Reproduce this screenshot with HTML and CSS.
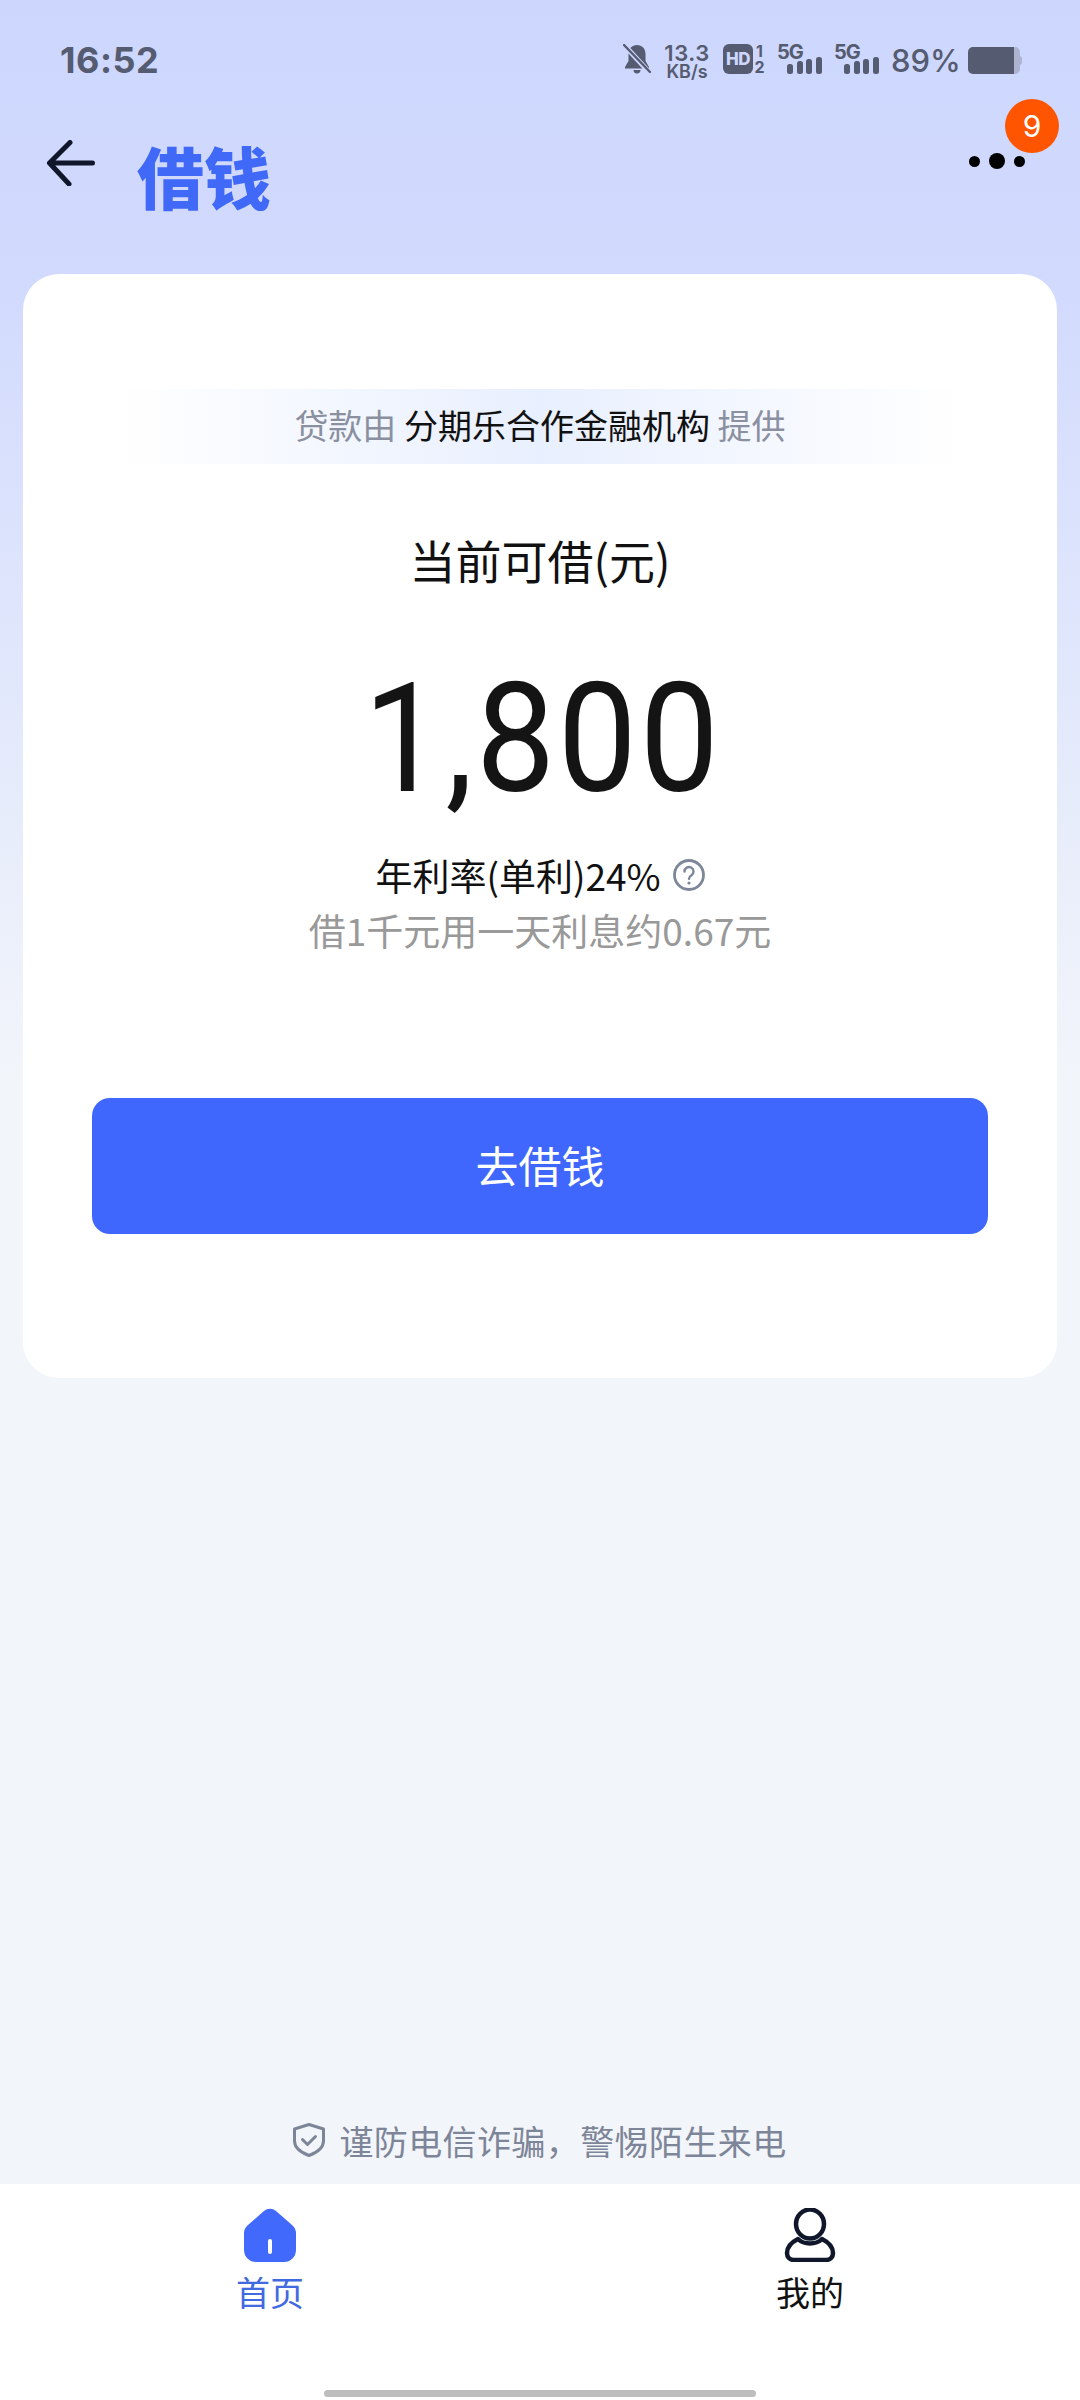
FILE: index.html
```html
<!DOCTYPE html>
<html lang="zh">
<head>
<meta charset="utf-8">
<title>借钱</title>
<link rel="stylesheet" href="styles.css">
</head>
<body>
<div class="page">
  <div class="status">
    <span class="time">16:52</span>
    <div class="status-right">
      <svg class="bell" viewBox="0 0 28 30"><path d="M14 1c-5 0-8.500 3.500-8.500 9v7L2 23v1.500h24V23l-3.500-6v-7C22.500 4.500 19 1 14 1z" fill="#555b70"/><path d="M10.500 26a3.500 3.500 0 0 0 7 0z" fill="#555b70"/><path d="M2 2l24 26" stroke="#cdd6fd" stroke-width="5"/><path d="M1 1l26 27" stroke="#555b70" stroke-width="2.400" stroke-linecap="round"/></svg>
      <div class="speed"><span class="speed-n">13.3</span><span class="speed-u">KB/s</span></div>
      <div class="hd"><span class="hd-box">HD</span><div class="sim"><span>1</span><span>2</span></div></div>
      <div class="net"><span class="net-5g">5G</span><svg class="bars" viewBox="0 0 35 17"><rect x="0" y="7" width="6" height="10" rx="2.500"/><rect x="10" y="4" width="6" height="13" rx="2.500"/><rect x="19" y="2" width="6" height="15" rx="2.500"/><rect x="29" y="0" width="6" height="17" rx="2.500"/></svg></div>
      <div class="net"><span class="net-5g">5G</span><svg class="bars" viewBox="0 0 35 17"><rect x="0" y="7" width="6" height="10" rx="2.500"/><rect x="10" y="4" width="6" height="13" rx="2.500"/><rect x="19" y="2" width="6" height="15" rx="2.500"/><rect x="29" y="0" width="6" height="17" rx="2.500"/></svg></div>
      <span class="pct">89%</span>
      <svg class="battery" viewBox="0 0 54 27"><path d="M46 0h1a5 5 0 0 1 5 5v4a3 3 0 0 1 2 3v3a3 3 0 0 1-2 3v4a5 5 0 0 1-5 5h-1z" fill="#aeb4d0"/><path d="M5 0h41v27H5a5 5 0 0 1-5-5V5a5 5 0 0 1 5-5z" fill="#555b70"/></svg>
    </div>
  </div>

  <div class="nav">
    <svg class="back" viewBox="0 0 48 46"><path d="M45.500 23H3M23 2.500L2.500 23 22 44" fill="none" stroke="#10172a" stroke-width="5" stroke-linecap="round" stroke-linejoin="round"/></svg>
    <h1 class="title">借钱</h1>
    <div class="more">
      <i class="dot"></i><i class="dot dot-big"></i><i class="dot"></i>
      <span class="badge">9</span>
    </div>
  </div>

  <main class="card">
    <div class="lender"><span class="muted">贷款由</span> 分期乐合作金融机构 <span class="muted">提供</span></div>
    <div class="label">当前可借(元)</div>
    <div class="amount">1,800</div>
    <div class="rate">年利率(单利)24%<svg class="help" viewBox="0 0 32 32"><circle cx="16" cy="16" r="14.500" fill="none" stroke="#7d8799" stroke-width="2.800"/><path d="M11.500 12.500a4.500 4.500 0 1 1 7 3.700c-1.600 1-2.500 1.800-2.500 3.600" fill="none" stroke="#7d8799" stroke-width="2.400" stroke-linecap="round"/><circle cx="16" cy="24" r="1.600" fill="#7d8799"/></svg></div>
    <div class="interest">借1千元用一天利息约0.67元</div>
    <button class="cta">去借钱</button>
  </main>

  <div class="notice">
    <svg class="shield" viewBox="0 0 32 34"><path d="M16 1.500l14.500 4.500v12c0 7.500-6.500 11.500-14.500 14.500C8 29.500 1.500 25.500 1.500 18V6z" fill="none" stroke="#7d8598" stroke-width="3" stroke-linejoin="round"/><path d="M9.500 16.500l5 5 8-8" fill="none" stroke="#7d8598" stroke-width="3" stroke-linecap="round" stroke-linejoin="round"/></svg>
    <span>谨防电信诈骗，警惕陌生来电</span>
  </div>

  <nav class="tabs">
    <div class="tab tab-on">
      <svg class="tab-icon" viewBox="0 0 52 54"><path d="M20 3a9 9 0 0 1 12 0l16 14a11 11 0 0 1 4 8v17a12 12 0 0 1-12 12H12A12 12 0 0 1 0 42V25a11 11 0 0 1 4-8z" fill="#4169fb"/><rect x="24" y="31" width="4" height="15" rx="2" fill="#fff"/></svg>
      <span>首页</span>
    </div>
    <div class="tab">
      <svg class="tab-icon" viewBox="0 0 52 54"><ellipse cx="26" cy="16" rx="14" ry="14.500" fill="none" stroke="#10172a" stroke-width="4.500"/><path d="M14 31c-6 3-11 8-11 14 0 4 2.500 7 7 7h32c4.500 0 7-3 7-7 0-6-5-11-11-14-3 3-7 4.500-12 4.500S17 34 14 31z" fill="none" stroke="#10172a" stroke-width="4.500" stroke-linejoin="round"/></svg>
      <span>我的</span>
    </div>
  </nav>
  <div class="home-bar"><i class="home-pill"></i></div>
</div>
</body>
</html>
```
FILE: styles.css
```css
* { box-sizing: border-box; }
html, body { margin: 0; padding: 0; }
body { width: 1080px; height: 2400px; overflow: hidden; font-family: "Noto Sans CJK SC", "Noto Sans", sans-serif; }
.page { width: 1080px; height: 2400px; display: flex; flex-direction: column; background: linear-gradient(180deg, #cdd6fd 0, #d2dbfd 300px, #f2f5fa 1080px, #f2f5fa 100%); }

.status { height: 120px; padding: 38px 58px 0 60px; display: flex; justify-content: space-between; align-items: flex-start; color: #555b70; font-family: Inter, "Noto Sans", sans-serif; flex: none; }
.time { font-size: 36px; font-weight: 700; line-height: 44px; letter-spacing: 0.500px; }
.status-right { display: flex; align-items: flex-start; margin-top: 5px; }
.bell { width: 28px; height: 30px; margin: 1px 13px 0 0; }
.speed { display: flex; flex-direction: column; align-items: center; width: 46px; margin-right: 13px; font-weight: 600; }
.speed-n { font-size: 22px; line-height: 20px; letter-spacing: 0.500px; }
.speed-u { font-size: 18px; line-height: 17px; }
.hd { display: flex; margin-right: 11px; }
.hd-box { width: 30px; height: 30px; background: #555b70; color: #cdd6fd; border-radius: 6px; font-size: 17px; font-weight: 800; line-height: 30px; text-align: center; margin-top: 1px; letter-spacing: -0.500px; }
.sim { width: 13px; display: flex; flex-direction: column; align-items: center; font-size: 16px; font-weight: 700; line-height: 16px; }
.net { width: 46px; height: 32px; margin-right: 11px; display: flex; flex-direction: column; }
.net-5g { font-size: 20px; font-weight: 700; line-height: 18px; letter-spacing: -1px; }
.bars { width: 35px; height: 17px; fill: #555b70; margin: -4px 0 0 10px; }
.pct { font-size: 31px; font-weight: 500; line-height: 36px; width: 66px; margin: 0 11px 0 0; white-space: nowrap; }
.battery { width: 54px; height: 27px; margin-top: 4px; }

.nav { height: 154px; padding: 0 60px 0 47px; display: flex; align-items: flex-start; flex: none; }
.back { width: 48px; height: 46px; margin-top: 20px; flex: none; }
.title { margin: 10px 0 0 42px; font-size: 67px; font-weight: 900; line-height: 90px; color: #4169f8; }
.more { margin-left: auto; margin-top: 31px; position: relative; display: flex; align-items: center; gap: 9px; width: 55px; height: 20px; margin-right: -4px; }
.dot { width: 11px; height: 11px; border-radius: 50%; background: #000; flex: none; }
.dot-big { width: 16px; height: 16px; }
.badge { position: absolute; right: -35px; top: -52px; width: 54px; height: 54px; border-radius: 50%; background: #ff5500; color: #fff; font-family: Inter, sans-serif; font-size: 30px; line-height: 54px; text-align: center; }

.card { margin: 0 23px; height: 1104px; background: #fff; border-radius: 36px; padding-top: 115px; display: flex; flex-direction: column; align-items: center; flex: none; }
.lender { width: 860px; height: 75px; line-height: 72px; text-align: center; font-size: 34px; color: #111; background: linear-gradient(90deg, rgba(232,240,254,0) 0, #e8effe 50%, rgba(232,240,254,0) 100%); white-space: pre; }
.muted { color: #8a90a0; }
.label { margin-top: 64px; font-size: 46px; line-height: 62px; color: #111; }
.amount { margin: 59px 0 0 6px; font-family: Roboto, sans-serif; font-size: 153px; font-weight: 400; line-height: 179px; letter-spacing: 3px; color: #141414; transform: scaleX(0.92); }
.rate { margin-top: 22px; font-size: 37px; line-height: 50px; color: #111; display: flex; align-items: center; }
.help { width: 32px; height: 32px; margin-left: 12px; }
.interest { font-size: 37px; line-height: 50px; margin-top: 5px; color: #999; }
.cta { margin-top: 143px; width: 896px; height: 136px; padding: 0 0 4px; border: 0; border-radius: 18px; background: #4067fd; color: #fff; font: 400 43px "Noto Sans CJK SC", sans-serif; }

.notice { margin-top: auto; height: 44px; margin-bottom: 22px; display: flex; align-items: center; justify-content: center; gap: 14px; font-size: 34px; letter-spacing: 0.400px; color: #7d8598; flex: none; }
.shield { width: 32px; height: 34px; }

.tabs { height: 206px; background: #fff; display: flex; padding: 24px 0 0; flex: none; }
.tab { width: 540px; display: flex; flex-direction: column; align-items: center; font-size: 34px; line-height: 44px; color: #111; }
.tab-on { color: #4169e0; }
.tab-icon { width: 52px; height: 54px; margin-bottom: 8px; }
.home-bar { height: 10px; background: #fff; display: flex; justify-content: center; flex: none; }
.home-pill { width: 432px; height: 7px; border-radius: 4px; background: #bdbdbd; }
```
